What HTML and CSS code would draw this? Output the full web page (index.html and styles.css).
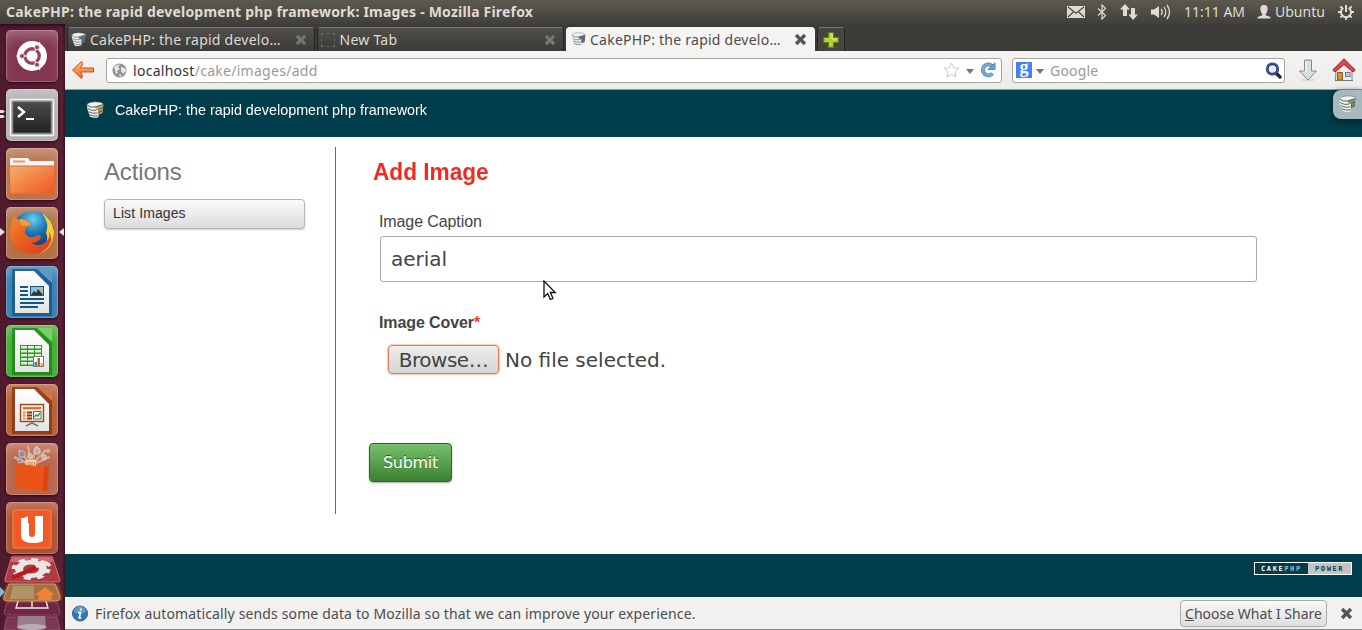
FILE: index.html
```
<!DOCTYPE html>
<html lang="en">
<head>
<meta charset="utf-8">
<title>CakePHP: the rapid development php framework: Images</title>
<link rel="stylesheet" href="styles.css">
</head>
<body>
<svg class="defs" width="0" height="0">
  <defs>
    <symbol id="cake" viewBox="0 0 18 18">
      <path d="M.8 3.500 Q3 .8 9 .8 Q15.500 .8 17.300 3 L16.800 8 L15.500 12 L13 13 L12.500 16 Q8 17.800 4 15.800 L2.700 12 L1.500 8.500Z" class="icing"/>
      <path d="M9 6 L17.300 3.500 L16.500 12 L12.800 13.500 V8.500 L10.500 9Z" class="slice"/>
      <path d="M1 4 Q4 7 9 6 L17.300 3.500 M1.800 7.500 Q5 10.300 10.500 9.200 M2.500 10.700 Q6 13 11.500 12 M3.200 13.700 Q7 15.800 12.300 14.800 M12.800 8.500 V13.300 M13 8.300 L16.800 7 M13 11.200 L16.300 9.800" class="layer" stroke-width=".9"/>
      <path d="M1 3.500 Q3 .9 9 .9 Q16 .9 17.200 3" class="layer" stroke-width=".5"/>
    </symbol>
    <symbol id="cross" viewBox="0 0 12 12"><path d="M3 .8 L6 3.800 L9 .8 L11.200 3 L8.200 6 L11.200 9 L9 11.200 L6 8.200 L3 11.200 L.8 9 L3.800 6 L.8 3Z"/></symbol>
    <linearGradient id="paper" x2="0" y2="1"><stop stop-color="#fff"/><stop offset="1" stop-color="#e3e3e3"/></linearGradient>
    <linearGradient id="folder" x2="1" y2="1"><stop stop-color="#f5b06c"/><stop offset="1" stop-color="#ee5420"/></linearGradient>
    <linearGradient id="screen" x2="0" y2="1"><stop stop-color="#4b4b4b"/><stop offset="1" stop-color="#222"/></linearGradient>
    <radialGradient id="globe" cx=".5" cy=".2" r=".7"><stop stop-color="#6bcdf0"/><stop offset=".5" stop-color="#1a6fb0"/><stop offset="1" stop-color="#123a78"/></radialGradient>
    <linearGradient id="fox" x2="1" y2="1"><stop stop-color="#f08a2c"/><stop offset=".5" stop-color="#ea5a20"/><stop offset="1" stop-color="#d93a1c"/></linearGradient>
    <linearGradient id="arrow" x2="0" y2="1"><stop stop-color="#fac07a"/><stop offset="1" stop-color="#e9702c"/></linearGradient>
  </defs>
</svg>

<header class="panel">
  <div class="window-title">CakePHP: the rapid development php framework: Images - Mozilla Firefox</div>
  <div class="indicators">
    <svg class="mail" width="18" height="12" viewBox="0 0 18 12"><rect width="18" height="12" fill="#dfdbd2"/><path d="M1 1 L9 7.200 L17 1 M1 11 L6.300 6 M17 11 L11.700 6" fill="none" stroke="#4a4843" stroke-width="1.200"/></svg>
    <svg class="bluetooth" width="10" height="16" viewBox="0 0 10 16"><path d="M1 4.500 L8.500 11.500 L5 15 V1 L8.500 4.500 L1 11.500" fill="none" stroke="#dfdbd2" stroke-width="1.200"/></svg>
    <svg class="network" width="18" height="16" viewBox="0 0 18 16"><path d="M5 0 L10 5.500 H7 V12 H3 V5.500 H0Z M11 4 H15 V10.500 H18 L13 16 L8.500 10.500 H11Z" fill="#dfdbd2"/></svg>
    <svg class="volume" width="20" height="16" viewBox="0 0 20 16"><path d="M0 5.500 H3 L8 2 V14 L3 10.500 H0Z" fill="#dfdbd2"/><path d="M10 5 Q12.500 8 10 11 M13 3 Q16.500 8 13 13 M16 1 Q21 8 16 15" fill="none" stroke="#dfdbd2" stroke-width="1.300"/></svg>
    <span class="clock">11:11 AM</span>
    <svg class="user" width="14" height="14" viewBox="0 0 14 14"><path d="M7 0 C10 0 11 2 10.500 5 Q10 8 8.700 9 V10.300 L13.500 12 V13.500 H.5 V12 L5.300 10.300 V9 Q4 8 3.500 5 C3 2 4 0 7 0Z" fill="#dfdbd2"/></svg>
    <span class="account">Ubuntu</span>
    <svg class="gear" width="16" height="16" viewBox="0 0 16 16" fill="none" stroke="#dfdbd2"><path d="M5.300 4 A5 5 0 1 0 10.700 4" stroke-width="2"/><path d="M8 1 V8" stroke-width="2"/><path d="M3.700 8 H0 M12.300 8 H16 M8 12.500 V16 M4.800 11.200 L2.300 13.700 M11.200 11.200 L13.700 13.700 M4.500 4.500 L2.300 2.300 M11.500 4.500 L13.700 2.300" stroke-width="1.800"/></svg>
  </div>
</header>

<div class="desktop">
  <nav class="launcher">
    <div class="tile dash"><svg viewBox="0 0 52 52"><circle cx="26" cy="26" r="15" fill="#fff"/><circle cx="26" cy="26" r="7.200" fill="none" stroke="#954760" stroke-width="3.400"/><path d="M26 26 L10 26 M26 26 L34 12 M26 26 L34 40" stroke="#fff" stroke-width="1.200"/><circle cx="26" cy="26" r="5.300" fill="#fff"/><g fill="#954760" stroke="#fff" stroke-width=".8"><circle cx="16" cy="26" r="2.500"/><circle cx="31" cy="17.300" r="2.500"/><circle cx="31" cy="34.700" r="2.500"/></g></svg></div>
    <div class="tile terminal"><svg viewBox="0 0 52 52"><rect x="4.500" y="10.500" width="43" height="36" rx="1" fill="#a9a9a9" stroke="#f6f6f6" stroke-width="1.500"/><rect x="7" y="13" width="38" height="31" fill="url(#screen)" stroke="#656565"/><path d="M12 18 L18 23 L12 28" fill="none" stroke="#fff" stroke-width="2.400"/><path d="M20 30 H28" stroke="#fff" stroke-width="2"/></svg>
      <svg class="running" viewBox="0 0 5 10"><path d="M0 1h3l2 1.500-2 1.500H0zM0 6h3l2 1.500-2 1.500H0z"/></svg></div>
    <div class="tile files"><svg viewBox="0 0 52 52"><path d="M4 11 Q4 10 5 10 H21 Q23 10 24 13 H47 Q48 13 48 14 V22 H4Z" fill="#f4f4f2"/><path d="M7 12.500 H19 V14.500 H7Z" fill="#e99a66"/><path d="M3 18 H49 L48 45 Q48 46 47 46 H5 Q4 46 4 45Z" fill="url(#folder)" stroke="#e2662b"/></svg></div>
    <div class="tile firefox"><svg viewBox="0 0 52 52"><circle cx="27" cy="25" r="21" fill="url(#globe)"/><path d="M36 6 Q46 12 48 24 Q48 40 35 46 Q44 33 40 26 Q44 17 36 6Z" fill="#f6cf32"/><path d="M8 9 Q10 13 14 12 Q22 12 25 18 Q22 19 20 21 Q17 27 23 30 Q28 31 32 28 Q37 30 34 32 Q31 36 25 36 Q34 41 41 34 Q44 30 43 24 Q48 33 42 40 Q35 48 24 47 Q8 45 4 31 Q3 18 8 9Z" fill="url(#fox)"/><path d="M14 12 Q21 12 25 18 L18 19 Q13 18 14 12Z" fill="#f39c3a"/></svg>
      <svg class="running" viewBox="0 0 5 10"><path d="M0 1 L5 5 L0 9Z"/></svg><svg class="running focused" viewBox="0 0 5 10"><path d="M5 1 L0 5 L5 9Z"/></svg></div>
    <div class="tile writer"><svg viewBox="0 0 52 52"><path d="M6 3 H46 V50 H6Z" fill="#0e4d7b" opacity=".65"/><path d="M31 3 H46 V17Z" fill="#5b9bc8"/><path d="M9 5 H28 L43 20 V47 H9Z" fill="url(#paper)"/><path d="M14 21 H22 M14 25 H22 M14 29 H22 M14 33 H38 M14 37 H38 M14 41 H32" stroke="#155785" stroke-width="2"/><rect x="24.500" y="20.500" width="13" height="9" fill="#8fc0e0" stroke="#155785"/><path d="M25 29 L28 25 L30 27 L32 23 L37 29Z" fill="#353535"/><circle cx="35" cy="22.800" r="1.200" fill="#e7b938"/></svg></div>
    <div class="tile calc"><svg viewBox="0 0 52 52"><path d="M6 3 H46 V50 H6Z" fill="#137d0c" opacity=".65"/><path d="M31 3 H46 V17Z" fill="#79cf67"/><path d="M9 5 H28 L43 20 V47 H9Z" fill="url(#paper)"/><rect x="14" y="20" width="22" height="21" fill="#2b9b1b"/><g fill="#dff2dc"><path d="M15 21h6v2.500h-6zM22 21h6v2.500h-6zM29 21h6v2.500h-6zM15 25h6v2.500h-6zM22 25h6v2.500h-6zM29 25h6v2.500h-6zM15 29h6v2.500h-6zM22 29h6v2.500h-6zM29 29h6v2.500h-6zM15 33h6v2.500h-6zM22 33h6v2.500h-6zM15 37h6v2.500h-6zM22 37h6v2.500h-6z"/></g><rect x="27.500" y="31.500" width="10" height="10" fill="#fff" stroke="#777"/><path d="M28.500 37h2.500v4h-2.500z" fill="#3384c4"/><path d="M31.500 33h2.500v8h-2.500z" fill="#d85b22"/><path d="M34.500 38h2.500v3h-2.500z" fill="#e6bd27"/></svg></div>
    <div class="tile impress"><svg viewBox="0 0 52 52"><path d="M6 3 H46 V50 H6Z" fill="#813307" opacity=".7"/><path d="M31 3 H46 V17Z" fill="#c9764b"/><path d="M9 5 H28 L43 20 V47 H9Z" fill="url(#paper)"/><rect x="14.500" y="20.500" width="23" height="17" fill="#fbe9dc" stroke="#a64511" stroke-width="1.400"/><path d="M17 24.200 H35" stroke="#d4672b" stroke-width="2"/><path d="M17 28.500h2.500M17 31.500h2.500M17 34.500h2.500" stroke="#df8a58" stroke-width="2"/><path d="M21 28.500h5M21 31.500h5M21 34.500h5" stroke="#8b3709" stroke-width="2"/><rect x="27.500" y="27.500" width="7.500" height="7.500" fill="#fff" stroke="#666"/><path d="M28.500 33 L30 31 L32 32 L34 29" stroke="#28a528" fill="none" stroke-width="1.400"/><path d="M26 38 V40 M26 39 L20 42 M26 39 L32 42" stroke="#777" stroke-width="1.800"/></svg></div>
    <div class="tile store"><svg viewBox="0 0 52 52"><path d="M25 22 L8 14 M25 22 L13 7 M25 22 L22 3 M25 22 L31 3 M25 22 L40 7 M25 22 L44 14" stroke="#f8dccd" stroke-width="2.500" opacity=".5"/><g stroke="#ecdcd4" stroke-width=".7"><circle cx="16" cy="11" r="3.300" fill="#7f93aa"/><circle cx="31" cy="8" r="3.300" fill="#b9b4b0"/><circle cx="24" cy="13" r="2.500" fill="#cfb09e"/><circle cx="38" cy="14" r="2.500" fill="#cbb6a9"/><circle cx="14" cy="18" r="2" fill="#718b9d"/><circle cx="42" cy="8" r="1.500" fill="#b9968a"/></g><path d="M9 21 L43 24 L41 48 L10 45Z" fill="#ea5419"/><path d="M38 23.500 L43 24 L41 48 L37 47.600Z" fill="#d94512"/><path d="M21 22 V18.500 H28.500 V23" fill="none" stroke="#fff0e2" stroke-width="2.500"/><path d="M21 22 V19 H28.500 V23" fill="none" stroke="#ef7b31" stroke-width="1"/></svg></div>
    <div class="tile music"><svg viewBox="0 0 52 52"><rect x="7" y="8" width="38" height="38" rx="1" fill="#f15a26" stroke="#ff8651"/><path d="M15 16 H18 L22 14 V21 H23 V32 Q23 35 26 35 Q29 35 29 32 V14 H37 V39 Q34 41 26 41 Q15 41 15 33Z" fill="#fff"/></svg></div>
    <svg class="folded" width="65" height="81" viewBox="0 0 65 81">
      <defs><filter id="glow"><feGaussianBlur stdDeviation="1.800"/></filter></defs>
      <path d="M7 53 H57 L60 64 Q60 66 57 66 H7 Q4 66 4 64Z" fill="#6c2743" stroke="#944565"/><path d="M18 52 L16 59 H48 L46 52 M32 52 V58" stroke="#f5e8e3" stroke-width="1.400" fill="none"/>
      <path d="M7 68 H57 L60 81 H4Z" fill="#793751" stroke="#9c506c"/><path d="M18 67 H45 L46 79 Q32 84 17 79Z" fill="#9d7c8d"/><ellipse cx="32" cy="78" rx="14.500" ry="3" fill="#b9acb4"/>
      <path d="M8 36 H57 L61 50 H3Z" fill="#e68b35" filter="url(#glow)"/><path d="M9 35 H55 L60 49 Q60 52 56 52 H7 Q3 52 4 49Z" fill="#a57044" stroke="#df9c54"/><path d="M13 37 H34 V50 H10Z" fill="#ae9469"/><path d="M45 38 L55 46 H51 L52 51 H38 L39 46 H35Z" fill="#ef8138"/>
      <path d="M12 7 H52 L60 31 Q60 33 58 33 H7 Q4 33 5 30Z" fill="#b03a43" stroke="#ce7477"/><path d="M12.500 8 H51.500 L53 13 H11Z" fill="#cf696b"/>
      <g transform="translate(31 20) scale(1 .56)"><circle r="12" fill="none" stroke="#e9e6e3" stroke-width="8"/><circle r="17" fill="none" stroke="#e9e6e3" stroke-width="5" stroke-dasharray="7 6.300"/></g><path d="M14 28 L35 19" stroke="#bd171d" stroke-width="4.500" stroke-linecap="round"/><path d="M36 18 L42 13 Q48 14 50 17" fill="none" stroke="#e7e6e5" stroke-width="3.500"/>
      <path d="M0 38 L5 43 L0 48Z" fill="#78bbe5"/>
    </svg>
  </nav>

  <main class="browser">
    <div class="tabs">
      <div class="tab"><svg class="favicon"><use href="#cake"/></svg><span class="tab-label">CakePHP: the rapid develo…</span><svg class="close"><use href="#cross"/></svg></div>
      <div class="tab"><span class="blank-icon"></span><span class="tab-label">New Tab</span><svg class="close"><use href="#cross"/></svg></div>
      <div class="tab active"><svg class="favicon"><use href="#cake"/></svg><span class="tab-label">CakePHP: the rapid develo…</span><svg class="close"><use href="#cross"/></svg></div>
      <div class="add-tab"><svg width="16" height="16" viewBox="0 0 16 16"><path d="M5.500 .7 H10.500 V5.500 H15.300 V10.500 H10.500 V15.300 H5.500 V10.500 H.7 V5.500 H5.500Z" fill="#b7d334" stroke="#5d8511" stroke-width="1.200"/><path d="M7 2 H9 V7 H14" stroke="#e1ed91" fill="none"/></svg></div>
    </div>
    <div class="toolbar">
      <svg class="back" width="24" height="20" viewBox="0 0 24 20"><path d="M10.500 1.500 L1.500 10 L10.500 18.500 L11.500 16 L9.500 12 H22.500 V8 H9.500 L11.500 4Z" fill="url(#arrow)" stroke="#cd4d16" stroke-linejoin="round"/></svg>
      <div class="field address">
        <svg class="world" width="15" height="15" viewBox="0 0 15 15"><circle cx="7.500" cy="7.500" r="7" fill="#919191"/><path d="M2 4 Q4 1 8 1.500 L6 4 L8 6 L5 8 L6 10 L4 11 L3 7Z M9 4 L13 5 L14 8 L11 11 L9 8Z M7 11 L10 12 L8 14Z" fill="#e6e6e6"/></svg>
        <span class="url"><b>localhost</b>/cake/images/add</span>
        <svg class="star" width="17" height="16" viewBox="0 0 17 16"><path d="M8.500 1 L10.600 5.700 L15.800 6.200 L12 9.700 L13 15 L8.500 12.300 L4 15 L5 9.700 L1.200 6.200 L6.400 5.700Z" fill="#fff" stroke="#c7c7c7"/></svg>
        <span class="drop"></span>
        <svg class="reload" width="16" height="16" viewBox="0 0 16 16"><path d="M12 3.800 A5.500 5.500 0 1 0 12.500 11.500" fill="none" stroke="#4a88c0" stroke-width="3.800"/><path d="M12 3.800 A5.500 5.500 0 1 0 12.500 11.500" fill="none" stroke="#75aadb" stroke-width="2.400"/><path d="M15 .8 V7.500 H8Z" fill="#6ba5d8" stroke="#4a88c0"/></svg>
      </div>
      <div class="field search">
        <span class="google">g</span><span class="drop"></span><span class="placeholder">Google</span>
        <svg class="lens" width="17" height="17" viewBox="0 0 17 17"><path d="M11 11 L15 15" stroke="#29292e" stroke-width="3.500" stroke-linecap="round"/><circle cx="7.500" cy="7" r="5.200" fill="#e6ecf8" stroke="#203481" stroke-width="2.800"/><circle cx="7.500" cy="7" r="5.500" fill="none" stroke="#6170b5" stroke-width=".8"/></svg>
      </div>
      <svg class="download" width="20" height="23" viewBox="0 0 20 23"><ellipse cx="10" cy="21" rx="8" ry="1.500" fill="#ddd"/><path d="M6.500 1 H13.500 V12 H18.500 L10 21 L1.500 12 H6.500Z" fill="#d8dddd" stroke="#858a8c"/><path d="M8 2.500 V13" stroke="#fff"/></svg>
      <svg class="home" width="24" height="24" viewBox="0 0 24 24"><path d="M4 10 L12 4 L20 10 V22.500 H3.500Z" fill="#eee" stroke="#888"/><path d="M5.500 14.500 H10.500 V22 H5.500Z" fill="#d19425" stroke="#8b5c12"/><rect x="13.500" y="14.500" width="4.500" height="4" fill="#bdcfe0" stroke="#727e87"/><path d="M12 .8 L23.300 12 L21 14 L12 6.500 L3 14 L.7 12Z" fill="#d7494b" stroke="#9f252b"/><path d="M3 22.500 H21" stroke="#777"/></svg>
    </div>

    <div class="page">
      <div class="page-header">
        <svg class="logo"><use href="#cake"/></svg>
        <h1>CakePHP: the rapid development php framework</h1>
        <div class="debug"><svg><use href="#cake"/></svg></div>
      </div>
      <div class="content">
        <aside class="actions"><h3>Actions</h3><a class="list-link">List Images</a></aside>
        <form class="image-form">
          <h2>Add Image</h2>
          <label class="caption-label">Image Caption</label>
          <div class="text-input">aerial</div>
          <label class="cover-label">Image Cover<i>*</i></label>
          <div class="file-row"><span class="browse">Browse…</span><span class="no-file">No file selected.</span></div>
          <div class="submit">Submit</div>
        </form>
        <svg class="pointer" width="14" height="21" viewBox="0 0 14 21"><path d="M1 1 V17 L4.700 13.500 L7.300 19.500 L10 18.300 L7.400 12.500 H12.300Z" fill="#fff" stroke="#111" stroke-width="1.300"/></svg>
      </div>
      <div class="page-footer"><div class="power"><span class="power-name">CAKE<i>PHP</i></span><span class="power-word">POWER</span></div></div>
    </div>

    <div class="notice">
      <svg class="info" width="16" height="17" viewBox="0 0 16 17"><circle cx="8" cy="8.500" r="7.500" fill="#3977b0" stroke="#275e91"/><path d="M2 7 A6 6 0 0 1 14 7 Q8 10 2 7Z" fill="#75a4cd" opacity=".7"/><path d="M8.800 3.500 V5.500 M6 7.500 H8.500 L7.300 13 H9.300" stroke="#fff" stroke-width="1.700" fill="none"/></svg>
      <span class="notice-text">Firefox automatically sends some data to Mozilla so that we can improve your experience.</span>
      <span class="choose"><u>C</u>hoose What I Share</span>
      <svg class="close"><use href="#cross"/></svg>
    </div>
  </main>
</div>
</body>
</html>
```
FILE: styles.css
```
* { box-sizing: border-box; }
body { margin: 0; width: 1362px; height: 630px; overflow: hidden; font-family: "Noto Sans", sans-serif; font-size: 14px; color: #4c4c4c; white-space: nowrap; }
.defs { position: absolute; }
svg { flex: none; display: block; }
h1, h2, h3 { margin: 0; font-weight: normal; }

.panel { height: 24px; display: flex; align-items: center; justify-content: space-between; padding: 0 8px 0 6px; background: linear-gradient(#5c594f, #403f3a); color: #dfdbd2; }
.window-title { font-weight: bold; letter-spacing: .2px; line-height: 20px; }
.indicators { display: flex; align-items: center; }
.bluetooth { margin-left: 12px; }
.network { margin-left: 13px; }
.volume { margin-left: 13px; }
.clock { width: 62px; margin-left: 13px; padding-bottom: 1px; }
.user { margin-left: 11px; }
.account { width: 50px; margin-left: 4px; padding-bottom: 1px; }
.gear { margin-left: 13px; }

.desktop { display: flex; height: 606px; }
.launcher { width: 65px; flex: none; padding: 6px 0 0 6px; display: flex; flex-direction: column; gap: 7px; background: linear-gradient(90deg, #511a2f, #5a2035 95%, #3c1425); overflow: hidden; box-shadow: inset 0 5px 5px -4px #17060e; }
.tile { position: relative; flex: none; width: 52px; height: 52px; border-radius: 5px; box-shadow: inset 0 0 0 1px rgba(255,255,255,.2), inset 0 10px 15px -6px rgba(255,255,255,.35), 0 1px 3px #28071a; }
.tile svg { width: 52px; height: 52px; }
.dash { background: #833650; }
.terminal { background: #b4b0b2; }
.files { background: #b8754d; }
.firefox { background: #b27045; }
.writer { background: #377fb3; }
.calc { background: #41ad35; }
.impress { background: #b65f32; }
.store { background: #b9664b; }
.music { background: #ad522f; }
.tile .running { position: absolute; left: -6px; top: 20px; width: 5px; height: 10px; fill: #e8dde2; }
.tile .focused { left: 53px; }
.folded { margin: -12px 0 0 -6px; }

.browser { flex: 1; min-width: 0; display: flex; flex-direction: column; background: #fff; }
.tabs { height: 27px; flex: none; display: flex; align-items: flex-end; gap: 2px; padding-left: 2px; background: #3c3b37; }
.tab { width: 247.500px; height: 24px; padding: 0 7px 0 3px; display: flex; align-items: center; border: 1px solid #24231f; border-top-color: #777670; border-bottom: 0; border-radius: 4px 4px 0 0; background: linear-gradient(#504f4b, #3c3b37); color: #dfdbd2; }
.favicon { width: 15px; height: 15px; fill: #586b7f; stroke: #59697a; }
.icing { fill: #f3f4ef; stroke: none; }
.tab-label { margin-left: 4px; padding-bottom: 1px; flex: 1; letter-spacing: .25px; }
.blank-icon { width: 14px; height: 14px; margin-right: 1px; border: 1px dashed #686762; }
.close { width: 12px; height: 12px; fill: #777670; stroke: none; }
.tabs .active { width: 249px; padding: 0 7px 0 4px; background: #f5f4f2; color: #4c4c4c; border-color: #f5f4f2; }
.active .close, .notice .close { width: 13px; height: 13px; fill: #555; }
.add-tab { width: 28px; height: 24px; display: grid; place-items: center; border: 1px solid #262521; border-top-color: #777670; border-bottom: 0; border-radius: 4px 4px 0 0; background: #454440; }
.toolbar { height: 39px; flex: none; display: flex; align-items: center; padding: 0 6px; border-bottom: 1px solid #9d9b96; background: linear-gradient(#f5f4f2, #eeeceb); }
.field { height: 25px; display: flex; align-items: center; border: 1px solid #a5a39d; border-radius: 3px; background: #fff; }
.address { width: 896px; flex: none; margin-left: 11px; padding: 0 5px 0 5px; }
.url { margin-left: 6px; flex: 1; color: #999; letter-spacing: .28px; }
.url b { font-weight: normal; color: #333; }
.drop { width: 0; border: 4px solid transparent; border-top: 5px solid #777; border-bottom: 0; margin: 2px 6px 0 6px; }
.search { width: 273px; flex: none; margin-left: 10px; padding: 0 2px 0 3px; }
.google { width: 16px; height: 16px; background: #4580f4; color: #fff; text-align: center; font: bold 18px/11px "Liberation Serif", serif; }
.search .drop { margin: 2px 6px 0 4px; }
.placeholder { flex: 1; color: #999; letter-spacing: .2px; }
.download { margin-left: 13px; }
.home { margin-left: 14px; }

.page { flex: 1; display: flex; flex-direction: column; font-family: "Liberation Sans", Arial, sans-serif; }
.page-header { position: relative; height: 47px; flex: none; display: flex; align-items: flex-start; padding: 11px 0 0 21px; background: #003d4c; color: #fff; }
.logo { width: 18px; height: 18px; }
.logo, .debug { fill: #b2aa66; stroke: #4c5140; }
.slice { stroke: none; }
.layer { fill: none; }
h1 { margin-left: 11px; font-size: 15px; line-height: 18px; transform: scaleX(.957); transform-origin: left; }
.debug { position: absolute; top: 0; right: 0; width: 29px; height: 29px; padding: 5px; border-radius: 8px 0 0 8px; background: #a7b9be; box-shadow: 0 2px 6px #001c24; }
.debug svg { width: 19px; height: 18px; }
.debug { fill: #8d9468; stroke: #42514f; }
.debug .icing { fill: #c7d4d4; }
.content { position: relative; height: 417px; flex: none; display: flex; padding: 10px 0 40px 39px; }
.actions { width: 232px; height: 367px; padding: 11px 30px 0 0; border-right: 1px solid #666; }
h3 { font-size: 24px; line-height: 28px; color: #777; letter-spacing: -.15px; }
.list-link { display: block; height: 30px; margin-top: 13px; padding-left: 8px; font-size: 14px; line-height: 27px; letter-spacing: .1px; color: #333; border: 1px solid #b5b5b5; border-radius: 4px; background: linear-gradient(#fafafa, #dcdcdc); box-shadow: 0 1px 2px #ccc; }
.image-form { width: 921px; padding: 11px 0 0 37px; }
h2 { font-size: 24px; line-height: 28px; font-weight: bold; color: #f32b1f; transform: scaleX(.943); transform-origin: left; }
label { display: block; margin-left: 6px; font-size: 16px; line-height: 20px; letter-spacing: -.1px; color: #444; }
.caption-label { margin-top: 26px; }
.text-input { width: 877px; height: 46px; margin: 4px 0 0 7px; padding-left: 10px; border: 1px solid #aaa; border-radius: 3px; font: 20px/44px "DejaVu Sans", sans-serif; color: #444; }
.cover-label { margin-top: 31px; font-weight: bold; }
.cover-label i { color: #f33; font-style: normal; }
.file-row { display: flex; align-items: flex-start; height: 30px; margin: 12px 0 0 15px; font: 20px/30px "DejaVu Sans", sans-serif; color: #444; }
.browse { width: 111px; height: 29px; border: 1px solid #eb7a52; border-radius: 4px; text-align: center; line-height: 28px; letter-spacing: -.5px; background: linear-gradient(#ededed, #d5d5d5); box-shadow: 0 0 1px 1px #f3c9b9; }
.no-file { margin-left: 6px; }
.submit { width: 83px; height: 39px; margin: 68px 0 0 -4px; text-align: center; font: 16px/37px "DejaVu Sans", sans-serif; letter-spacing: -.3px; color: #fff; text-shadow: 0 -1px #28601f; border: 1px solid #2d6324; border-radius: 4px; background: linear-gradient(#76bf6b, #3b8230); box-shadow: 0 1px 2px #aaa; }
.pointer { position: absolute; left: 478px; top: 143px; }
.page-footer { height: 43px; flex: none; padding: 8px 10px; display: flex; justify-content: flex-end; background: #003d4c; }
.power { width: 98px; height: 13px; display: flex; border: 1px solid #fff; font: bold 7px/12px "DejaVu Sans Mono", monospace; letter-spacing: 1.600px; color: #fff; }
.power-name { width: 53px; padding-left: 6px; }
.power i { font-style: normal; color: #a5b7bc; }
.power-word { flex: 1; padding-left: 7px; background: #c4c4c4; color: #003d4c; }
.notice { height: 33px; flex: none; display: flex; align-items: center; padding: 0 9px 0 7px; background: #f2f1f0; border-top: 1px solid #fff; border-bottom: 1px solid #888; }
.notice-text { margin-left: 7px; flex: 1; letter-spacing: .14px; }
.choose { width: 147px; height: 27px; margin-right: 13px; border: 1px solid #aaa; border-radius: 4px; text-align: center; line-height: 25px; background: linear-gradient(#f9f9f9, #dedede); }
```
